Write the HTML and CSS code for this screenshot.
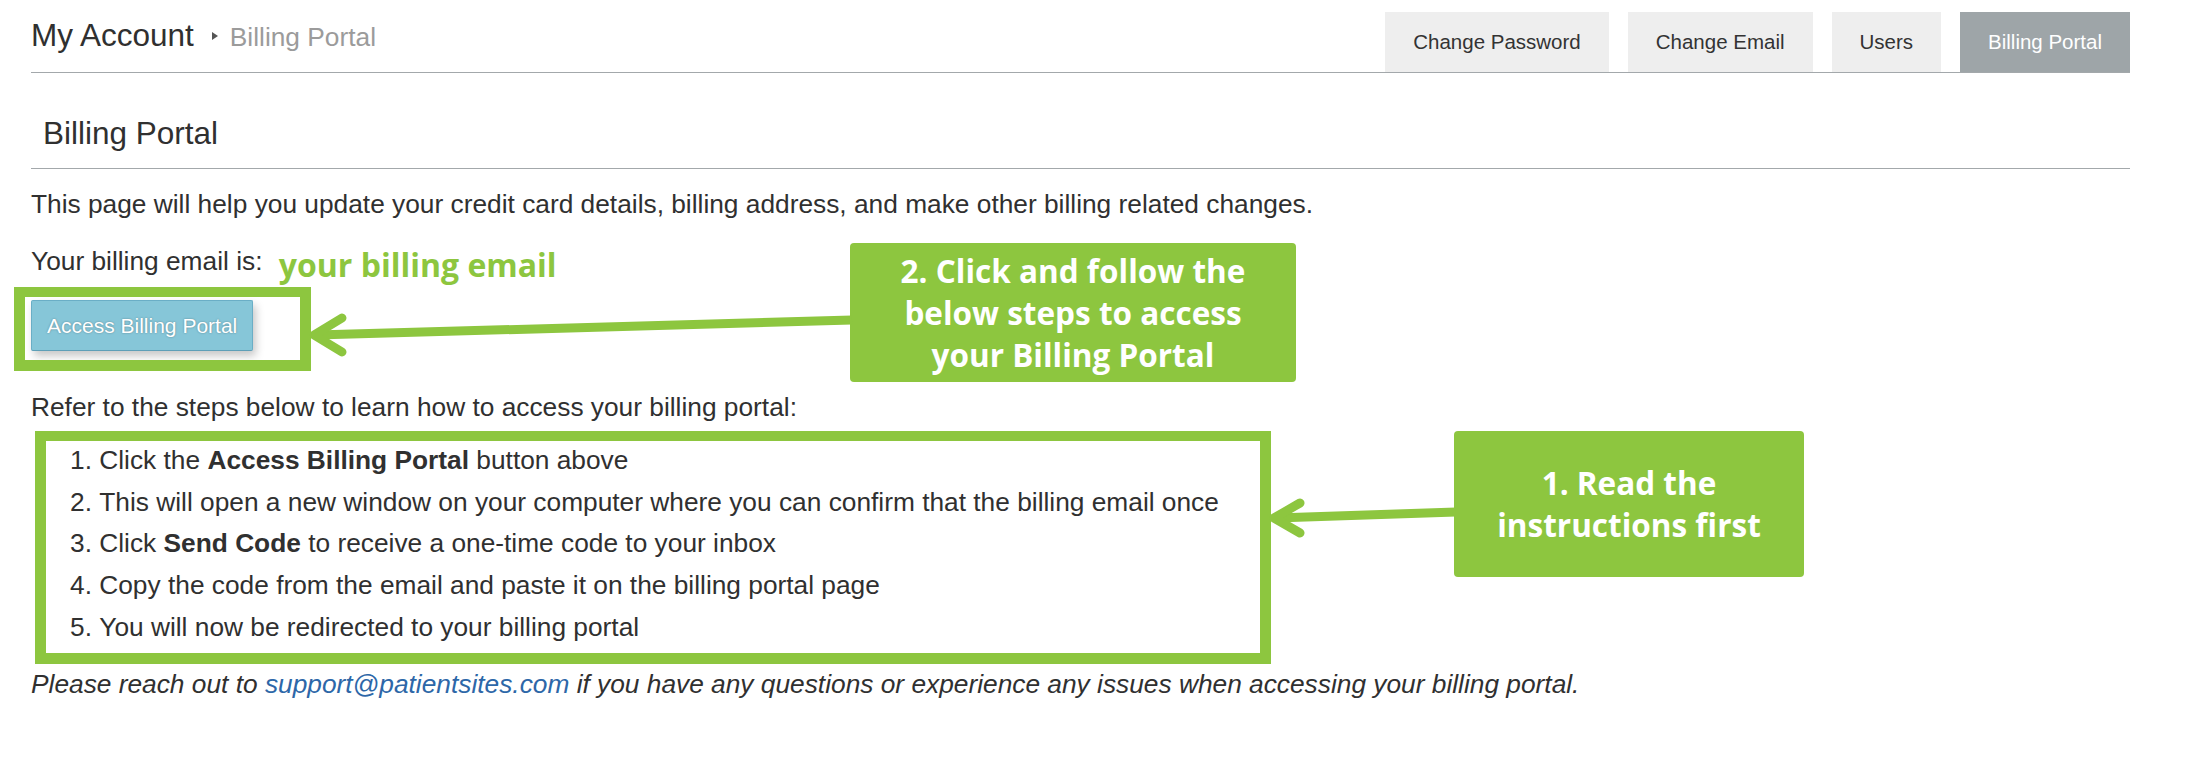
FILE: index.html
```html
<!DOCTYPE html>
<html lang="en">
<head>
<meta charset="utf-8">
<title>My Account - Billing Portal</title>
<link rel="stylesheet" href="styles.css">
</head>
<body>
<div class="page">
  <header class="topbar">
    <div class="crumbs">
      <h1 class="title">My Account</h1><span class="caret"></span><span class="crumb">Billing Portal</span>
    </div>
    <nav class="tabs">
      <a class="tab" href="#">Change Password</a>
      <a class="tab" href="#">Change Email</a>
      <a class="tab" href="#">Users</a>
      <a class="tab active" href="#">Billing Portal</a>
    </nav>
  </header>

  <h2 class="section-title">Billing Portal</h2>

  <p class="intro">This page will help you update your credit card details, billing address, and make other billing related changes.</p>
  <p class="email-row">Your billing email is: <span class="email">your billing email</span></p>
  <div class="btn-row"><button class="btn-info" type="button">Access Billing Portal</button></div>
  <p class="refer">Refer to the steps below to learn how to access your billing portal:</p>
  <ol class="steps">
    <li>Click the <strong>Access Billing Portal</strong> button above</li>
    <li>This will open a new window on your computer where you can confirm that the billing email once</li>
    <li>Click <strong>Send Code</strong> to receive a one-time code to your inbox</li>
    <li>Copy the code from the email and paste it on the billing portal page</li>
    <li>You will now be redirected to your billing portal</li>
  </ol>
  <p class="note"><em>Please reach out to <a class="mail" href="#">support@patientsites.com</a> if you have any questions or experience any issues when accessing your billing portal.</em></p>

  <div class="hl hl-btn"></div>
  <div class="hl hl-steps"></div>
  <div class="callout callout-2">2. Click and follow the<br>below steps to access<br>your Billing Portal</div>
  <div class="callout callout-1">1. Read the<br>instructions first</div>
  <svg class="arrows" width="2192" height="773" viewBox="0 0 2192 773" aria-hidden="true">
    <g fill="none" stroke="#8dc63f" stroke-width="9" stroke-linecap="round" stroke-linejoin="round">
      <line x1="316" y1="335" x2="852" y2="320" stroke-linecap="butt"/>
      <polyline points="342,318 314,335 342,352"/>
      <line x1="1276" y1="518" x2="1456" y2="512" stroke-linecap="butt"/>
      <polyline points="1300,503 1274,518 1300,533"/>
    </g>
  </svg>
</div>
</body>
</html>
```

FILE: styles.css
```css
html, body {
  margin: 0;
  padding: 0;
  background: #ffffff;
}

body {
  font-family: "Liberation Sans", Arial, sans-serif;
  color: #303030;
  font-size: 26.3px;
  line-height: 37px;
}

.page {
  position: relative;
  width: 2192px;
  height: 773px;
  box-sizing: border-box;
  padding: 0 62px 0 31px;
  overflow: hidden;
}

/* ---------- top bar ---------- */
.topbar {
  display: flex;
  justify-content: space-between;
  align-items: flex-end;
  height: 73px;
  box-sizing: border-box;
  border-bottom: 1px solid #a3a8ab;
}

.crumbs {
  align-self: flex-start;
  padding-top: 17px;
  line-height: 36px;
  white-space: nowrap;
}

.title {
  display: inline;
  margin: 0;
  font-size: 31.5px;
  font-weight: normal;
  color: #303030;
}

.caret {
  display: inline-block;
  width: 0;
  height: 0;
  margin: 0 12px 0 18px;
  border-left: 6px solid #555555;
  border-top: 4.5px solid transparent;
  border-bottom: 4.5px solid transparent;
  vertical-align: 6px;
}

.crumb {
  font-size: 26.3px;
  color: #9b9b9b;
}

.tabs {
  display: flex;
  gap: 19px;
}

.tab {
  display: block;
  height: 60px;
  line-height: 60px;
  padding: 0 28px;
  font-size: 20.5px;
  color: #333333;
  background: #eeeeee;
  text-decoration: none;
  white-space: nowrap;
}

.tab.active {
  background: #9ea5a8;
  color: #ffffff;
}

/* ---------- section ---------- */
.section-title {
  margin: 42px 0 0;
  padding: 0 0 17px 12px;
  font-size: 31.5px;
  line-height: 36px;
  font-weight: normal;
  color: #303030;
  border-bottom: 1px solid #a3a8ab;
}

.intro {
  margin: 17px 0 20px;
}

.email-row {
  margin: 0 0 20px;
  white-space: nowrap;
}

.email {
  margin-left: 9px;
  font-family: "Open Sans", "Liberation Sans", sans-serif;
  font-weight: 700;
  font-size: 32px;
  line-height: 30px;
  color: #8dc63f;
  vertical-align: -7px;
}

.btn-row {
  height: 51px;
  margin: 0 0 38px;
}

.btn-info {
  display: block;
  height: 51px;
  margin: 0;
  padding: 0 15px;
  box-sizing: border-box;
  font-family: "Liberation Sans", Arial, sans-serif;
  font-size: 21px;
  line-height: 49px;
  color: #ffffff;
  background: #86c6d8;
  border: 1px solid #6aaec6;
  border-bottom-color: #5e9fb7;
  border-radius: 2px;
  text-shadow: 0 0 2px rgba(0, 0, 0, 0.35);
  box-shadow: 3px 5px 9px rgba(0, 0, 0, 0.22);
}

.refer {
  margin: 0 0 14px;
}

.steps {
  margin: 0 0 17px;
  padding: 0 0 0 39px;
  list-style-position: inside;
  line-height: 41.7px;
  white-space: nowrap;
}

.note {
  margin: 0;
  white-space: nowrap;
}

.mail {
  color: #2d67a8;
  text-decoration: none;
}

/* ---------- annotation overlay ---------- */
.hl {
  position: absolute;
  box-sizing: border-box;
  border: 11px solid #8dc63f;
  border-top-width: 10px;
  border-bottom-width: 11px;
}

.hl-btn {
  left: 14px;
  top: 287px;
  width: 297px;
  height: 84px;
}

.hl-steps {
  left: 35px;
  top: 431px;
  width: 1236px;
  height: 233px;
}

.callout {
  position: absolute;
  display: flex;
  align-items: center;
  justify-content: center;
  box-sizing: border-box;
  background: #8dc63f;
  border-radius: 4px;
  color: #ffffff;
  font-family: "Open Sans", "Liberation Sans", sans-serif;
  font-weight: 700;
  font-size: 31.5px;
  line-height: 42px;
  text-align: center;
  white-space: nowrap;
}

.callout-2 {
  left: 850px;
  top: 243px;
  width: 446px;
  height: 139px;
}

.callout-1 {
  left: 1454px;
  top: 431px;
  width: 350px;
  height: 146px;
}

.arrows {
  position: absolute;
  left: 0;
  top: 0;
  pointer-events: none;
}
```
